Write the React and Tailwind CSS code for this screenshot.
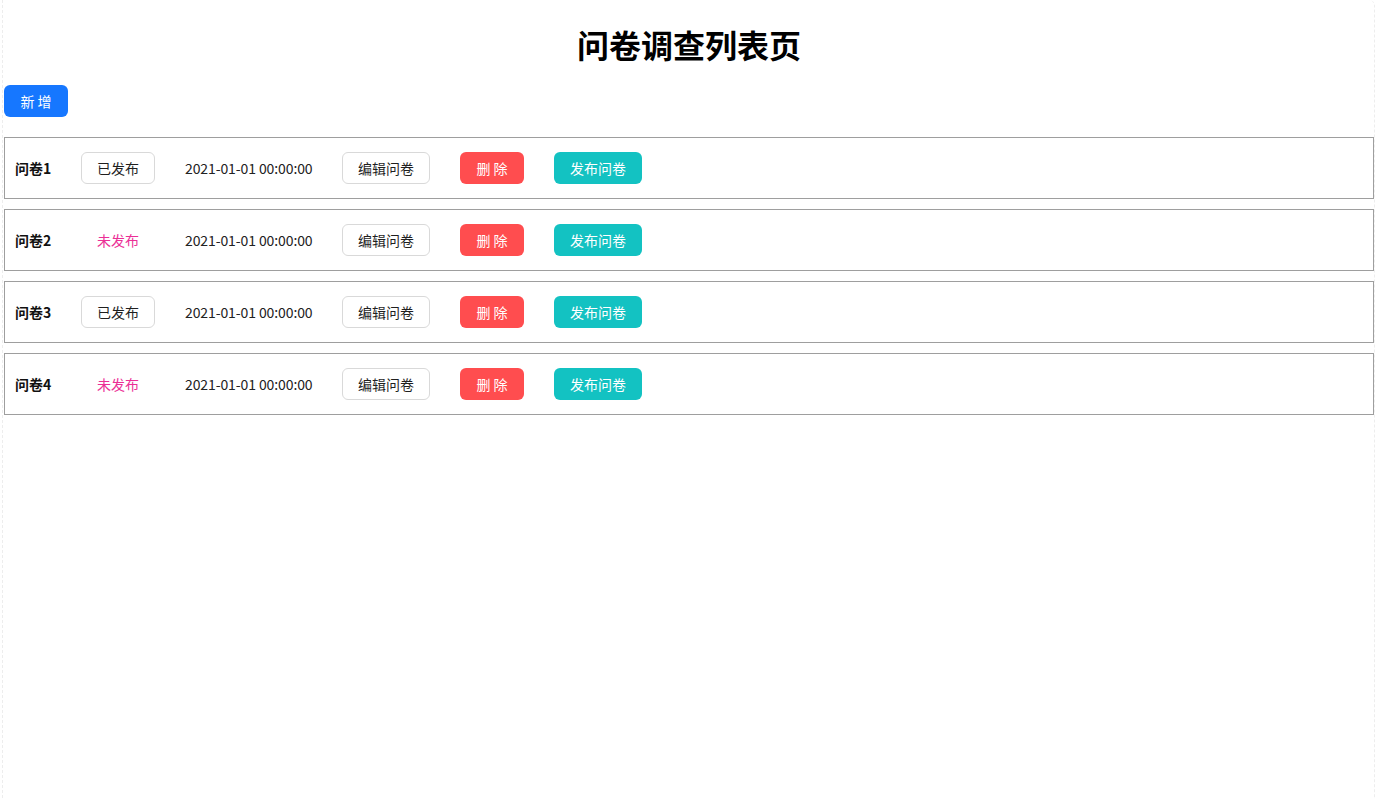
import React from "react";

const questions = [
  { id: 1, title: "问卷1", published: true, createdAt: "2021-01-01 00:00:00" },
  { id: 2, title: "问卷2", published: false, createdAt: "2021-01-01 00:00:00" },
  { id: 3, title: "问卷3", published: true, createdAt: "2021-01-01 00:00:00" },
  { id: 4, title: "问卷4", published: false, createdAt: "2021-01-01 00:00:00" },
];

const font = { fontFamily: '"Noto Sans CJK SC", "Noto Sans", sans-serif' };

// --- Row ---
const QuestionRow = ({ q }) => (
  <div className="flex items-center gap-[30px] whitespace-nowrap border border-[#9e9e9e] px-[10px] py-[14px]">
    <span className="w-[36px] shrink-0 text-[14px] font-bold text-[#111]">{q.title}</span>
    {q.published ? (
      <button className="h-[32px] w-[74px] shrink-0 rounded-[6px] border border-[#d9d9d9] bg-white text-[14px] text-[#1f1f1f]">
        已发布
      </button>
    ) : (
      <button className="h-[32px] w-[74px] shrink-0 rounded-[6px] text-[14px] text-[#eb2f96]">
        未发布
      </button>
    )}
    <span className="w-[127px] shrink-0 text-[14px] tracking-[-0.1px] text-[#222]">{q.createdAt}</span>
    <button className="h-[32px] w-[88px] shrink-0 rounded-[6px] border border-[#d9d9d9] bg-white text-[14px] text-[#1f1f1f]">
      编辑问卷
    </button>
    <button className="h-[32px] w-[64px] shrink-0 rounded-[6px] bg-[#ff4d4f] text-[14px] text-white">
      删 除
    </button>
    <button className="h-[32px] w-[88px] shrink-0 rounded-[6px] bg-[#13c2c2] text-[14px] text-white">
      发布问卷
    </button>
  </div>
);

export default function App() {
  return (
    <div className="h-[798px] w-full bg-white pl-[2px] pr-[1px]" style={font}>
      <div className="h-full rounded-tr-[6px] border-x border-dashed border-[#ededed] pl-[1px]">
        <h1 className="pt-[20px] text-center text-[32px] font-bold leading-[48px] text-black">
          问卷调查列表页
        </h1>
        <div className="mt-[17px]">
          <button className="h-[32px] w-[64px] rounded-[6px] bg-[#1677ff] text-[14px] text-white">
            新 增
          </button>
        </div>
        <div className="mt-[20px] flex flex-col gap-[10px]">
          {questions.map((q) => (
            <QuestionRow key={q.id} q={q} />
          ))}
        </div>
      </div>
    </div>
  );
}
